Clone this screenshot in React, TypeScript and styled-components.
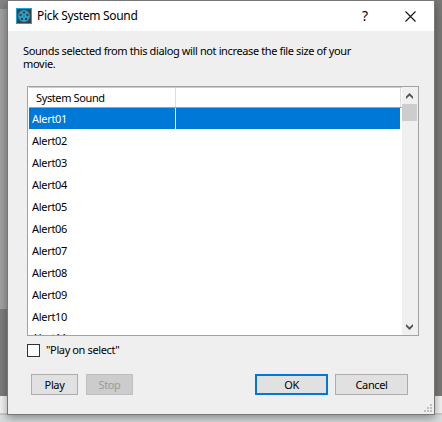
import React from "react";
import styled, { createGlobalStyle } from "styled-components";

const GlobalStyle = createGlobalStyle`
  * { box-sizing: border-box; }
  body { margin: 0; overflow: hidden; }
`;

const Desktop = styled.div`
  position: relative;
  display: flex;
  flex-direction: column;
  width: 442px;
  height: 422px;
  overflow: hidden;
  background: #d9dcdc;
  font: 11px/14px "Noto Sans", sans-serif;
`;

const Backdrop = styled.div<{ $left: string; $right: string; $height: number }>`
  flex: none;
  height: ${(p) => p.$height}px;
  background: linear-gradient(90deg, ${(p) => p.$left} 50%, ${(p) => p.$right} 50%);
`;

const Dialog = styled.section`
  position: absolute;
  left: 7px;
  top: 0;
  width: 428px;
  height: 415px;
  display: flex;
  flex-direction: column;
  border: 1px solid #777;
  background: #efefef;
  box-shadow: 0 3px 9px rgba(0, 0, 0, 0.38);
`;

const TitleBar = styled.header`
  display: flex;
  align-items: center;
  flex: none;
  height: 30px;
  padding-left: 8px;
  background: #fff;
  svg { flex: none; }
`;

const Label = styled.span<{ $spacing?: number }>`
  display: block;
  white-space: nowrap;
  letter-spacing: ${(p) => p.$spacing ?? -0.38}px;
`;

const Title = styled(Label)`
  margin-left: 5px;
  flex: 1;
  font-size: 12px;
  line-height: 16px;
`;

const Help = styled(Label)`
  width: 8px;
  margin-right: 35px;
  font-size: 14px;
  line-height: 18px;
`;

const Close = styled.svg`
  margin-right: 18px;
`;

const Message = styled.div`
  flex: none;
  height: 55px;
  padding: 13px 0 0 15px;
  span { line-height: 13px; }
`;

const ListBox = styled.div`
  display: flex;
  flex: none;
  width: 392px;
  height: 250px;
  margin-left: 19px;
  padding-left: 1px;
  border: 1px solid #a0a2a6;
  background: #fff;
`;

const Table = styled.div`
  width: 373px;
  overflow: hidden;
`;

const HeaderRow = styled.div`
  display: grid;
  grid-template-columns: 147px 225px;
  height: 21px;
  border-top: 1px solid #ccc;
  border-bottom: 1px solid #a0a0a0;
`;

const HeaderCell = styled.div`
  padding: 3px 0 0 7px;
  border-right: 1px solid #ddd;
`;

const Row = styled.div<{ $selected?: boolean }>`
  display: grid;
  grid-template-columns: 146px 224px;
  column-gap: 1px;
  height: 22px;
  padding-bottom: 1px;
  color: ${(p) => (p.$selected ? "#fff" : "#000")};
  > div { background: ${(p) => (p.$selected ? "#0078d7" : "#fff")}; }
  &:last-child > div { padding-top: 3px; }
`;

const Cell = styled.div`
  padding: 4px 0 0 3px;
`;

const ScrollBar = styled.div`
  display: flex;
  flex-direction: column;
  width: 16px;
  background: #f0f0f0;
`;

const Thumb = styled.div`
  height: 17px;
  width: 15px;
  background: #cdcdcd;
`;

const ScrollSpace = styled.div`
  flex: 1;
`;

const CheckRow = styled.label`
  display: flex;
  align-items: center;
  flex: none;
  height: 14px;
  margin: 7px 0 0 19px;
`;

const CheckBox = styled.div`
  width: 13px;
  height: 13px;
  margin-right: 6px;
  border: 1px solid #333;
  background: #fff;
`;

const Actions = styled.footer`
  display: flex;
  flex: none;
  margin: 17px 0 0 23px;
`;

const Button = styled.button<{ $width: number; $gap: number; $primary?: boolean }>`
  display: flex;
  align-items: center;
  justify-content: center;
  width: ${(p) => p.$width}px;
  height: 21px;
  margin: 0 ${(p) => p.$gap}px 0 0;
  padding: 0;
  border: ${(p) => (p.$primary ? "2px solid #0078d7" : "1px solid #adadad")};
  background: #e1e1e1;
  color: #000;
  font: inherit;
  &:disabled { background: #ccc; border-color: #bfbfbf; color: #9a9a9a; }
`;

const Grip = styled.svg`
  position: absolute;
  right: 2px;
  bottom: 2px;
`;

const sounds = Array.from({ length: 11 }, (_, i) => `Alert${String(i + 1).padStart(2, "0")}`);

const ReelIcon = () => (
  <svg width="16" height="16" viewBox="0 0 16 16">
    <rect x=".5" y=".5" width="15" height="15" fill="#3a4046" stroke="#18a5d5" />
    <circle cx="8" cy="8" r="5.9" fill="#2ba0c9" />
    <g fill="#34444d">
      <circle cx="8" cy="4.4" r="1.2" />
      <circle cx="4.6" cy="7" r="1.2" />
      <circle cx="11.4" cy="7" r="1.2" />
      <circle cx="5.9" cy="10.9" r="1.2" />
      <circle cx="10.1" cy="10.9" r="1.2" />
      <circle cx="8" cy="8" r=".5" />
    </g>
  </svg>
);

const Arrow = ({ down = false }: { down?: boolean }) => (
  <svg width="15" height="17" viewBox="0 0 15 17">
    <path
      d={down ? "M7.5 12 11 8.5V6L7.5 9.2 4 6v2.5z" : "M7.5 6 11 9.5V12L7.5 8.8 4 12V9.5z"}
      fill="#555"
    />
  </svg>
);

export default function App() {
  return (
    <Desktop>
      <GlobalStyle />
      <Backdrop $left="#858585" $right="#7b7a79" $height={9} />
      <Backdrop $left="#a2a2a2" $right="#7b7a79" $height={300} />
      <Backdrop $left="#7d7d7d" $right="#7b7a79" $height={87} />
      <Backdrop $left="#f3f3f3" $right="#f3f3f3" $height={17} />
      <Backdrop $left="#c9cccc" $right="#c9cccc" $height={2} />
      <Dialog>
        <TitleBar>
          <ReelIcon />
          <Title $spacing={-0.3}>Pick System Sound</Title>
          <Help>?</Help>
          <Close width="11" height="11" viewBox="0 0 11 11">
            <path d="M.5.5l10 10M10.5.5l-10 10" stroke="#111" strokeWidth="1.1" />
          </Close>
        </TitleBar>
        <Message>
          <Label>Sounds selected from this dialog will not increase the file size of your</Label>
          <Label $spacing={-0.3}>movie.</Label>
        </Message>
        <ListBox>
          <Table>
            <HeaderRow>
              <HeaderCell><Label>System Sound</Label></HeaderCell>
              <HeaderCell />
            </HeaderRow>
            {sounds.map((name, i) => (
              <Row key={name} $selected={i === 0}>
                <Cell><Label $spacing={-0.3}>{name}</Label></Cell>
                <Cell />
              </Row>
            ))}
          </Table>
          <ScrollBar>
            <Arrow />
            <Thumb />
            <ScrollSpace />
            <Arrow down />
          </ScrollBar>
        </ListBox>
        <CheckRow>
          <CheckBox />
          <Label>"Play on select"</Label>
        </CheckRow>
        <Actions>
          <Button $width={47} $gap={8}><Label>Play</Label></Button>
          <Button $width={47} $gap={122} disabled><Label>Stop</Label></Button>
          <Button $width={73} $gap={7} $primary><Label $spacing={-0.5}>OK</Label></Button>
          <Button $width={73} $gap={0}><Label>Cancel</Label></Button>
        </Actions>
        <Grip width="8" height="8" viewBox="0 0 8 8" fill="#bfbfbf">
          <path d="M6 0h2v2H6zM3 3h2v2H3zM6 3h2v2H6zM0 6h2v2H0zM3 6h2v2H3zM6 6h2v2H6z" />
        </Grip>
      </Dialog>
    </Desktop>
  );
}
